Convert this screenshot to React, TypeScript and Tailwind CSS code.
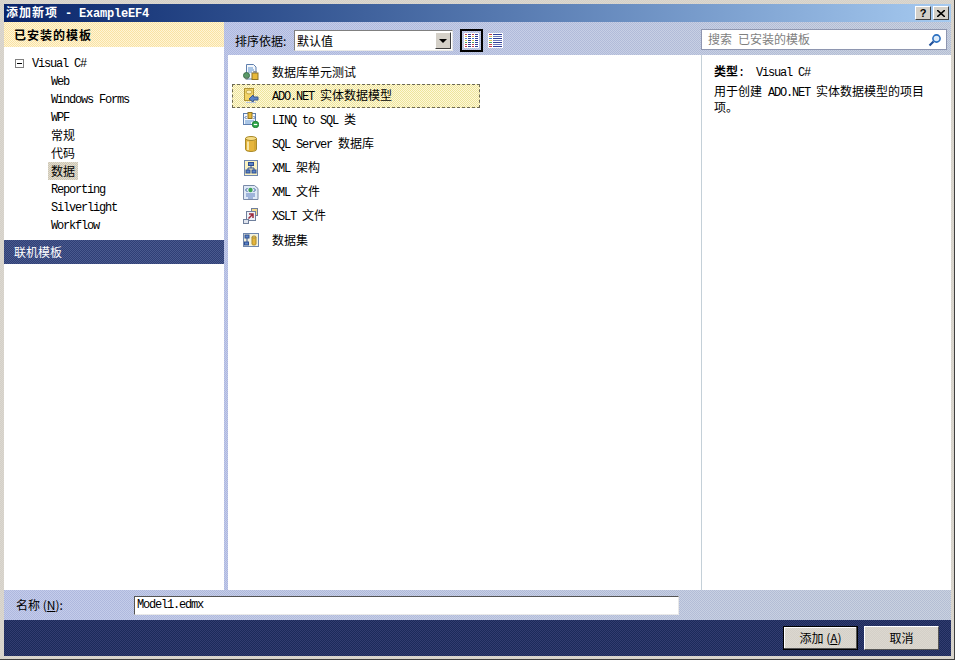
import React from "react";

const sans = "font-['Noto_Sans_CJK_SC','Liberation_Mono',monospace]";

// SimSun style latin: 6px per char
const Lat = ({ children }: { children: React.ReactNode }) => (
  <span className="font-['Liberation_Mono',monospace] text-[12px] tracking-[-1.2px] whitespace-pre">{children}</span>
);

// the screenshot is a 256 colour capture, panels are dithered
const dYellow = "bg-[image:repeating-conic-gradient(#fff5d6_0_25%,#f9e2a4_0_50%)] bg-[length:2px_2px]";
const dRow = "bg-[image:repeating-conic-gradient(#fff8d8_0_25%,#ece49c_0_50%)] bg-[length:2px_2px]";
const dLav =
  "bg-[image:repeating-conic-gradient(#ffffff20_0_25%,#5060a020_0_50%),linear-gradient(to_right,#bcc5e8,#c2cbdb)] bg-[length:2px_2px,100%_100%]";
const dBlue = "bg-[image:repeating-conic-gradient(#2f3f76_0_25%,#4a5a8e_0_50%)] bg-[length:2px_2px]";
const dNavy = "bg-[image:repeating-conic-gradient(#1b2a5a_0_25%,#323c70_0_50%)] bg-[length:2px_2px]";
const dTree = "bg-[image:repeating-conic-gradient(#cbc6b6_0_25%,#e4dccb_0_50%)] bg-[length:2px_2px]";
const dFace = "bg-[image:repeating-conic-gradient(#d4d0c8_0_25%,#dcd8d0_0_50%)] bg-[length:2px_2px]";

const DocIcon = () => (
  <svg width="16" height="16" viewBox="0 0 16 16">
    <path d="M3.5 .5h7l2.5 2.5v6h-3v6h-6.5z" fill="#f4f7fb" stroke="#5f7fae" />
    <path d="M5 4h5M5 6h6M5 8h4" stroke="#5f93cf" />
    <rect x="9" y="9" width="6" height="6.5" fill="#e8b93a" stroke="#8f7424" />
    <path d="M10.5 9V7.5h3V9" fill="none" stroke="#8f8f8f" />
    <circle cx="3.5" cy="11.5" r="3" fill="#5a9a68" stroke="#3b6d4b" />
    <rect x="2.5" y="13" width="2" height="2.5" fill="#6b7f72" />
  </svg>
);
const EntityIcon = () => (
  <svg width="16" height="16" viewBox="0 0 16 16">
    <rect x="1.5" y=".5" width="9" height="12" fill="#f3d468" stroke="#b09434" />
    <ellipse cx="6" cy="4" rx="3" ry="2" fill="#fbeeb8" stroke="#c0a440" />
    <path d="M6 11l4-4 .8 2H15v3h-4.200l-.8 2z" fill="#5b83c7" stroke="#39588f" />
    <path d="M3 14.500h10" stroke="#b8c4dc" />
  </svg>
);
const LinqIcon = () => (
  <svg width="16" height="16" viewBox="0 0 16 16">
    <rect x=".5" y="1.500" width="12" height="11" fill="#f4f7fb" stroke="#5f7fae" />
    <rect x="5" y=".5" width="4" height="6" fill="#e8b93a" stroke="#8f7424" />
    <path d="M3.500 4L2 5.500 3.500 7M10.500 4L12 5.500 10.500 7" fill="none" stroke="#3a5f9f" />
    <path d="M2 9h9M2 11h6" stroke="#5f93cf" />
    <circle cx="12.500" cy="12.500" r="3.200" fill="#2fa84a" stroke="#1f8036" />
    <path d="M10.800 12.500h3.400" stroke="#fff" strokeWidth="1.200" />
  </svg>
);
const DbIcon = () => (
  <svg width="16" height="16" viewBox="0 0 16 16">
    <path d="M2.500 2.500v11c0 1.100 2.300 2 5.500 2s5.500-.9 5.500-2v-11z" fill="#e6b53c" stroke="#a98a2a" />
    <ellipse cx="8" cy="2.500" rx="5.500" ry="2" fill="#f6dc86" stroke="#a98a2a" />
    <path d="M5 5.500v8.500" stroke="#f8e6a5" strokeWidth="2" />
    <path d="M12 5v9" stroke="#c79a2c" />
  </svg>
);
const SchemaIcon = () => (
  <svg width="16" height="16" viewBox="0 0 16 16">
    <rect x="1.500" y=".5" width="13" height="15" fill="#fbf2c0" stroke="#6f87ae" />
    <rect x="5.500" y="2.500" width="5" height="3" fill="#5b83c7" stroke="#2f4f8f" />
    <rect x="3" y="10" width="4" height="3" fill="#5b83c7" stroke="#2f4f8f" />
    <rect x="9" y="10" width="4" height="3" fill="#5b83c7" stroke="#2f4f8f" />
    <path d="M8 6v2H5v2M8 8h3v2" fill="none" stroke="#2f4f8f" />
  </svg>
);
const XmlIcon = () => (
  <svg width="16" height="16" viewBox="0 0 16 16">
    <path d="M.5 1.500h11l3.500 3v11h-14.500z" fill="#dfe9f6" stroke="#7a8aa8" />
    <circle cx="7.500" cy="6" r="2.200" fill="#3fa356" />
    <path d="M4.500 4L2.500 6l2 2M10.500 4l2 2-2 2" fill="none" stroke="#3a5f9f" />
    <path d="M3 10h9M3 12h9M5 14h5" stroke="#5f7fbf" />
  </svg>
);
const XsltIcon = () => (
  <svg width="16" height="16" viewBox="0 0 16 16">
    <rect x="8.500" y=".5" width="6" height="7" fill="#f2d98a" stroke="#6f7f9c" />
    <rect x="3.500" y="3.500" width="9" height="9" fill="#eef2f8" stroke="#6f7f9c" />
    <path d="M5.500 10.500l4-4M6 6h4v4" fill="none" stroke="#9c2b3c" strokeWidth="1.500" />
    <rect x=".5" y="11.500" width="5" height="4" fill="#dfe4ee" stroke="#6f7f9c" />
  </svg>
);
const DatasetIcon = () => (
  <svg width="16" height="16" viewBox="0 0 16 16">
    <rect x=".5" y="1.500" width="15" height="13" fill="#f4f2dc" stroke="#6f87ae" />
    <rect x="2" y="3" width="4" height="3" fill="#5b83c7" stroke="#2f4f8f" />
    <rect x="1.500" y="10" width="4" height="3" fill="#5b83c7" stroke="#2f4f8f" />
    <path d="M4 6v4" stroke="#2f4f8f" />
    <path d="M9 5v7c0 .8 1 1 2 1s2-.2 2-1V5z" fill="#e6b53c" stroke="#a98a2a" />
    <ellipse cx="11" cy="5" rx="2" ry="1" fill="#f6dc86" stroke="#a98a2a" />
  </svg>
);

const tick = ["#c23b4a", "#d8c050", "#4a78c8", "#d8c050", "#4aa35a", "#c23b4a"];

const ViewGridIcon = () => (
  <svg width="15" height="15" viewBox="0 0 15 15" shapeRendering="crispEdges">
    <rect width="15" height="15" fill="#fff" />
    {[1, 8].map((x) =>
      [1, 3, 5, 7, 9, 11, 13].map((y, r) => (
        <g key={`${x}-${y}`}>
          <rect x={x} y={y} width="2" height="1" fill={tick[r % 6]} />
          <rect x={x + 3} y={y} width="3" height="1" fill="#2f3f98" />
        </g>
      ))
    )}
  </svg>
);
const ViewListIcon = () => (
  <svg width="15" height="15" viewBox="0 0 15 15" shapeRendering="crispEdges">
    <rect width="15" height="15" fill="#fff" />
    {[1, 3, 5, 7, 9, 11, 13].map((y, r) => (
      <g key={y}>
        <rect x="1" y={y} width="3" height="1" fill={tick[r % 6]} />
        <rect x="5" y={y} width="9" height="1" fill={r % 2 ? "#6a78b8" : "#2f3f98"} />
      </g>
    ))}
  </svg>
);

const tree: { label: React.ReactNode; selected?: boolean }[] = [
  { label: <Lat>Web</Lat> },
  { label: <Lat>Windows Forms</Lat> },
  { label: <Lat>WPF</Lat> },
  { label: "常规" },
  { label: "代码" },
  { label: "数据", selected: true },
  { label: <Lat>Reporting</Lat> },
  { label: <Lat>Silverlight</Lat> },
  { label: <Lat>Workflow</Lat> },
];

const items: { icon: React.ReactNode; label: React.ReactNode; selected?: boolean }[] = [
  { icon: <DocIcon />, label: "数据库单元测试" },
  { icon: <EntityIcon />, label: <><Lat>ADO.NET </Lat>实体数据模型</>, selected: true },
  { icon: <LinqIcon />, label: <><Lat>LINQ to SQL </Lat>类</> },
  { icon: <DbIcon />, label: <><Lat>SQL Server </Lat>数据库</> },
  { icon: <SchemaIcon />, label: <><Lat>XML </Lat>架构</> },
  { icon: <XmlIcon />, label: <><Lat>XML </Lat>文件</> },
  { icon: <XsltIcon />, label: <><Lat>XSLT </Lat>文件</> },
  { icon: <DatasetIcon />, label: "数据集" },
];

const capBtn =
  "w-[16px] h-[14px] bg-[#d4d0c8] border border-t-white border-l-white border-r-[#404040] border-b-[#404040] flex items-center justify-center";

export default function App() {
  return (
    <div className={`w-[955px] h-[660px] flex flex-col ${dFace} border-r border-b border-r-[#404040] border-b-[#404040] pl-[4px] pr-[3px] pt-[4px] pb-[3px] text-[12px] leading-[14px] text-black ${sans}`}>
      {/* Title bar */}
      <div className="h-[18px] shrink-0 flex items-center justify-between pl-[2px] pr-[2px] bg-gradient-to-r from-[#0a246a] to-[#a6caf0]">
        <span className="text-white font-bold whitespace-pre">
          <span className="tracking-[1px]">添加新项</span>
          <span className="font-['Liberation_Mono',monospace] text-[12px] tracking-[-0.2px]"> - ExampleEF4</span>
        </span>
        <div className="flex gap-[2px]">
          <button className={capBtn}>
            <span className="font-['Liberation_Sans',sans-serif] font-bold text-[11px] leading-none">?</span>
          </button>
          <button className={capBtn}>
            <svg width="8" height="7" viewBox="0 0 8 7"><path d="M0 0l8 7M8 0L0 7" stroke="#000" strokeWidth="1.6" /></svg>
          </button>
        </div>
      </div>

      {/* Main area */}
      <div className="flex-1 flex min-h-0">
        {/* Left panel */}
        <div className="w-[220px] shrink-0 bg-white flex flex-col">
          <div className={`h-[25px] ${dYellow} flex items-center pl-[10px] font-bold tracking-[1px]`}>已安装的模板</div>
          <div className="pt-[7px] h-[193px]">
            <div className="h-[18px] flex items-center pl-[11px]">
              <span className="w-[9px] h-[9px] border border-[#808080] flex items-center justify-center">
                <span className="w-[5px] h-px bg-black" />
              </span>
              <span className="ml-[8px]"><Lat>Visual C#</Lat></span>
            </div>
            {tree.map((t, i) => (
              <div key={i} className="h-[18px] flex items-center pl-[44px]">
                <span className={`px-[3px] h-[18px] flex items-center ${typeof t.label === "string" ? "" : "pt-[2px]"} ${t.selected ? dTree : ""}`}>{t.label}</span>
              </div>
            ))}
          </div>
          <div className={`h-[24px] ${dBlue} text-white flex items-center pl-[10px]`}>联机模板</div>
        </div>

        {/* Right side */}
        <div className={`flex-1 flex flex-col min-w-0 ${dLav} pl-[4px]`}>
          {/* Toolbar */}
          <div className="h-[33px] shrink-0 flex items-center pt-[4px]">
            <span className="ml-[7px] w-[59px] whitespace-pre">排序依据:</span>
            <div className="w-[159px] h-[21px] bg-white border border-t-[#808080] border-l-[#808080] border-b-[#e8e8e8] border-r-[#e8e8e8] flex items-center justify-between pl-[2px] pr-[1px]">
              <span>默认值</span>
              <span className="w-[16px] h-[17px] bg-[#d4d0c8] border border-t-white border-l-white border-r-[#404040] border-b-[#404040] flex items-center justify-center">
                <span className="w-0 h-0 border-l-[4px] border-r-[4px] border-t-[4px] border-l-transparent border-r-transparent border-t-black" />
              </span>
            </div>
            <button className="ml-[7px] w-[23px] h-[23px] border-2 border-black flex items-center justify-center">
              <ViewGridIcon />
            </button>
            <span className="ml-[5px] flex"><ViewListIcon /></span>
            <div className="ml-auto mr-[4px] mb-[2px] w-[246px] h-[21px] bg-white border border-[#8e96b0] flex items-center justify-between pl-[6px] pr-[4px] text-[#7f7f7f]">
              <span>搜索<Lat> </Lat>已安装的模板</span>
              <svg width="14" height="14" viewBox="0 0 14 14">
                <circle cx="8.500" cy="5.500" r="3.600" fill="#dcebfa" stroke="#2a6fc0" strokeWidth="1.600" />
                <path d="M5.500 8.500L1.500 12.500" stroke="#1f4f9a" strokeWidth="2.200" />
              </svg>
            </div>
          </div>

          <div className="flex-1 flex min-h-0 bg-white">
            {/* Items */}
            <div className="w-[473px] shrink-0 pt-[5px] pl-[4px]">
              {items.map((it, i) => (
                <div
                  key={i}
                  className={`w-[248px] h-[24px] flex items-center pl-[10px] border border-dashed ${it.selected ? `${dRow} border-[#6d6a55]` : "border-transparent"}`}
                >
                  <span className="w-[29px] shrink-0 flex">{it.icon}</span>
                  <span className="whitespace-nowrap">{it.label}</span>
                </div>
              ))}
            </div>
            {/* Description */}
            <div className="flex-1 border-l border-[#c4d0d8] pl-[12px] pt-[9px]">
              <div className="whitespace-nowrap"><span className="font-bold">类型</span><Lat>:  Visual C#</Lat></div>
              <div className="mt-[4px] w-[216px]">用于创建<Lat> ADO.NET </Lat>实体数据模型的项目项。</div>
            </div>
          </div>
        </div>
      </div>

      {/* Name row */}
      <div className={`h-[30px] shrink-0 flex items-center ${dLav} pl-[12px]`}>
        <span className="w-[118px]">名称 (<span className="underline">N</span>):</span>
        <div className="w-[545px] h-[19px] bg-white border border-t-[#555] border-l-[#555] border-b-[#e8e8e8] border-r-[#e8e8e8] flex items-center pl-[2px]">
          <Lat>Model1.edmx</Lat>
        </div>
      </div>

      {/* Footer */}
      <div className={`h-[36px] shrink-0 flex items-center justify-end gap-[6px] pr-[12px] ${dNavy}`}>
        <button className={`w-[75px] h-[24px] ${dFace} border border-black shadow-[inset_-1px_-1px_0_#555,inset_1px_1px_0_#fff]`}>
          添加 (<span className="underline">A</span>)
        </button>
        <button className={`w-[75px] h-[24px] ${dFace} border border-t-white border-l-white border-r-[#555] border-b-[#555]`}>
          取消
        </button>
      </div>
    </div>
  );
}
